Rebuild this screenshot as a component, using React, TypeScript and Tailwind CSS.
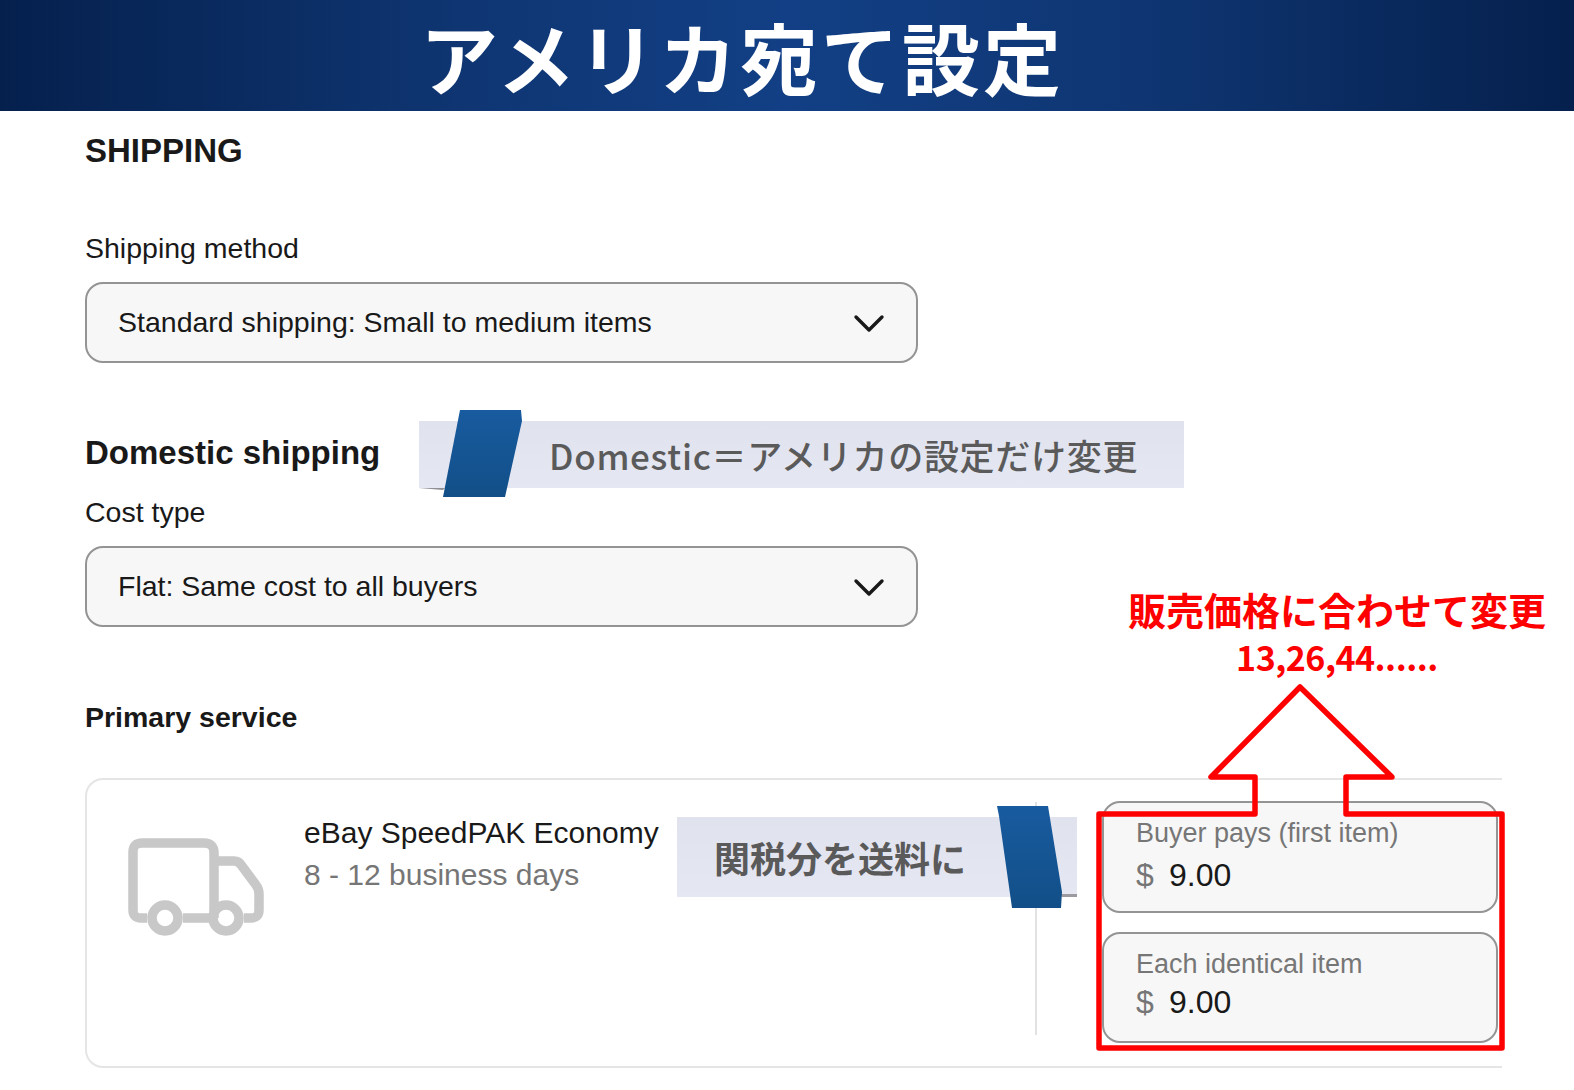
const font = "font-['Liberation_Sans','Noto_Sans_CJK_JP',sans-serif]";

function Chevron() {
  return (
    <svg width="32" height="20" viewBox="0 0 32 20" fill="none" className="shrink-0">
      <path d="M3 4 L16 17 L29 4" stroke="#191919" strokeWidth="3.4" strokeLinecap="round" strokeLinejoin="round" />
    </svg>
  );
}

function SelectBox({ text }: { text: string }) {
  return (
    <div className="flex h-[81px] w-[833px] items-center justify-between rounded-[18px] border-2 border-[#949494] bg-[#f7f7f7] pl-[31px] pr-[31px] text-[28.5px] text-[#191919]">
      <span>{text}</span>
      <Chevron />
    </div>
  );
}

function PriceBox({ label, value, valueTop, height }: { label: string; value: string; valueTop: string; height: string }) {
  return (
    <div className={`${height} w-[396px] rounded-[18px] border-2 border-[#949494] bg-[#f7f7f7] pl-[32px] pt-[12px]`}>
      <div className="text-[27px] leading-[36px] text-[#767676]">{label}</div>
      <div className={`flex items-center ${valueTop} text-[32px] leading-[38px]`}>
        <span className="w-[33px] text-[#767676]">$</span>
        <span className="text-[#191919]">{value}</span>
      </div>
    </div>
  );
}

function Truck() {
  return (
    <svg width="136" height="98" viewBox="0 0 136 98" fill="none" className="shrink-0">
      <path
        d="M19 80 H13 Q5 80 5 72 V14 Q5 5 14 5 H76 Q86 5 86 15 V80 M86 23 H106 Q111 23 114 28 L128 47 Q131 51 131 56 V72 Q131 80 123 80 H116 M86 80 H80 M55 80 H86"
        stroke="#c8c8c8"
        strokeWidth="9.5"
      />
      <circle cx="37" cy="80" r="13" stroke="#c8c8c8" strokeWidth="9.5" />
      <circle cx="98" cy="80" r="13" stroke="#c8c8c8" strokeWidth="9.5" />
    </svg>
  );
}

export default function App() {
  return (
    <div className={`relative h-[1090px] w-[1574px] overflow-hidden bg-white ${font}`}>
      <header className="flex h-[111px] items-center bg-[linear-gradient(90deg,#05204d_0%,#0f3673_30%,#123f85_50%,#0f3673_72%,#05204d_100%)] pl-[420px]">
        <h1 className="font-['Noto_Sans_CJK_JP',sans-serif] text-[78px] font-bold leading-none tracking-[3px] text-white">アメリカ宛て設定</h1>
      </header>

      <main className="pl-[85px] text-[#191919]">
        <h2 className="mt-[21px] text-[33px] font-bold leading-[38px]">SHIPPING</h2>
        <div className="mt-[60px] text-[28.5px] leading-[36px]">Shipping method</div>
        <div className="mt-[16px]"><SelectBox text="Standard shipping: Small to medium items" /></div>
        <h3 className="mt-[70px] text-[33px] font-bold leading-[40px]">Domestic shipping</h3>
        <div className="mt-[21px] text-[28.5px] leading-[36px]">Cost type</div>
        <div className="mt-[16px]"><SelectBox text="Flat: Same cost to all buyers" /></div>
        <h3 className="mt-[72px] text-[28.5px] font-bold leading-[36px]">Primary service</h3>

        <section className="mt-[43px] flex h-[290px] w-[1417px] rounded-l-[18px] border-y-2 border-l-2 border-[#e5e5e5]">
          <div className="ml-[41px] mt-[58px]"><Truck /></div>
          <div className="ml-[40px] mt-[32px]">
            <div className="text-[30px] leading-[42px] text-[#191919]">eBay SpeedPAK Economy</div>
            <div className="text-[30px] leading-[42px] text-[#767676]">8 - 12 business days</div>
          </div>
          <div className="ml-auto mt-[22px] h-[233px] w-[2px] bg-[#e2e2e2]" />
          <div className="ml-[65px] mr-[4px] mt-[21px] flex flex-col gap-[19px]">
            <PriceBox label="Buyer pays (first item)" value="9.00" valueTop="mt-[5px]" height="h-[112px]" />
            <PriceBox label="Each identical item" value="9.00" valueTop="mt-[1px]" height="h-[111px]" />
          </div>
        </section>
      </main>

      {/* ribbon: Domestic */}
      <div className="absolute left-[419px] top-[421px] flex h-[67px] w-[765px] items-center bg-[linear-gradient(180deg,#e0e2ee,#e5e7f3)] pl-[130px] font-['Noto_Sans_CJK_JP',sans-serif] text-[35px] font-medium leading-none tracking-[0.7px] text-[#5a5a5a]">
        Domestic＝アメリカの設定だけ変更
      </div>
      <svg className="absolute left-[419px] top-[408px]" width="110" height="92" viewBox="0 0 110 92">
        <defs>
          <linearGradient id="rb1" x1="0" y1="0" x2="0" y2="1">
            <stop offset="0" stopColor="#185b9f" />
            <stop offset="1" stopColor="#124f88" />
          </linearGradient>
        </defs>
        <path d="M0 80 H26 L24 82 Z" fill="#8f8f95" />
        <path d="M41 2 H102 L103 13 L86 89 H24 Z" fill="url(#rb1)" />
      </svg>

      {/* ribbon: customs */}
      <div className="absolute left-[677px] top-[817px] flex h-[80px] w-[400px] items-center bg-[linear-gradient(180deg,#e0e2ee,#e5e7f3)] pl-[37px] font-['Noto_Sans_CJK_JP',sans-serif] text-[36px] font-bold leading-none text-[#5a5a5a]">
        関税分を送料に
      </div>
      <svg className="absolute left-[990px] top-[804px]" width="90" height="106" viewBox="0 0 90 106">
        <defs>
          <linearGradient id="rb2" x1="0" y1="0" x2="0" y2="1">
            <stop offset="0" stopColor="#185b9f" />
            <stop offset="1" stopColor="#124f88" />
          </linearGradient>
        </defs>
        <path d="M70 90 H87 V93 H72 Z" fill="#9a9aa0" />
        <path d="M7 2 H58 L72 88 L71 104 H22 L9 12 Z" fill="url(#rb2)" />
      </svg>

      {/* red annotation */}
      <div className="absolute left-[1127px] top-[585px] w-[420px] text-center font-['Noto_Sans_CJK_JP',sans-serif] text-[38px] font-bold leading-[48px] text-[#ff0000]">
        <div className="whitespace-nowrap">販売価格に合わせて変更</div>
        <div className="whitespace-nowrap text-[34px] tracking-[-0.5px]">13,26,44......</div>
      </div>
      <svg className="absolute left-0 top-0" width="1574" height="1090" viewBox="0 0 1574 1090" fill="none">
        <path
          d="M1300 687 L1211 777 H1255 V814 H1099 V1048 H1502 V814 H1346 V777 H1392 Z"
          stroke="#ff0000"
          strokeWidth="5.5"
          strokeLinejoin="round"
        />
      </svg>
    </div>
  );
}
